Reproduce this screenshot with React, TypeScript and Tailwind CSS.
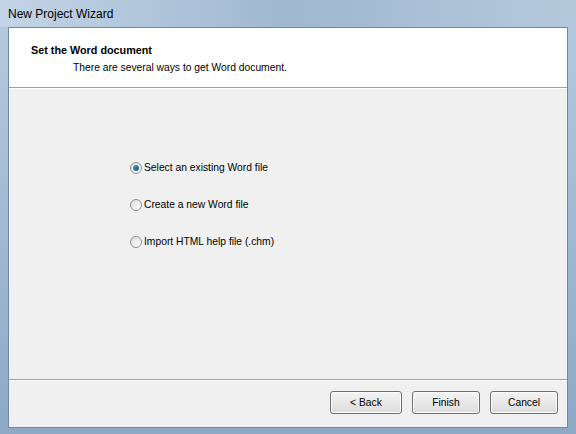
const font = { fontFamily: "'Liberation Sans', Arial, sans-serif" };

const Radio = ({ checked, label }: { checked?: boolean; label: string }) => (
  <label className="flex h-[13px] items-center gap-[2px] text-[10.3px] text-black">
    <span className="flex h-[12px] w-[12px] items-center justify-center rounded-full border border-[#8f8f8f] bg-gradient-to-br from-[#dcdcdc] to-[#ffffff]">
      {checked && (
        <span className="h-[6px] w-[6px] rounded-full bg-gradient-to-br from-[#4fa6c8] to-[#10506e]" />
      )}
    </span>
    {label}
  </label>
);

const Button = ({ children, w }: { children: string; w: string }) => (
  <button
    className={`h-[23px] ${w} rounded-[3px] border border-[#707070] bg-gradient-to-b from-[#f4f4f4] to-[#dcdcdc] text-[10.3px] text-black shadow-[inset_0_0_0_1px_#fcfcfc]`}
  >
    {children}
  </button>
);

export default function App() {
  return (
    <div
      className="flex h-[434px] w-[576px] flex-col bg-gradient-to-b from-[#b6cbe0] to-[#8ea9c6]"
      style={font}
    >
      {/* title bar */}
      <div className="flex h-[27px] items-center bg-gradient-to-r from-[#c3d4e5] via-[#9fb8d0] to-[#b4c9dc] pl-[8px] text-[12px] text-black">
        New Project Wizard
      </div>

      <div className="flex flex-1">
        <div className="w-[8px]" />
        <div className="flex flex-1 flex-col border border-[#6e8aa6] bg-[#f0f0f0]">
          {/* header */}
          <div className="h-[60px] border-b border-[#a0a0a0] bg-white pl-[22px] pt-[14px]">
            <div className="text-[10.8px] font-bold text-black">Set the Word document</div>
            <div className="mt-[2px] pl-[42px] text-[10.3px] text-black">
              There are several ways to get Word document.
            </div>
          </div>
          <div className="h-px bg-white" />

          {/* body */}
          <div className="flex flex-1 flex-col gap-[24px] pl-[121px] pt-[72px]">
            <Radio checked label="Select an existing Word file" />
            <Radio label="Create a new Word file" />
            <Radio label="Import HTML help file (.chm)" />
          </div>

          {/* footer */}
          <div className="h-px bg-[#a0a0a0]" />
          <div className="h-px bg-white" />
          <div className="flex h-[46px] items-start justify-end gap-[10px] pr-[9px] pt-[10px]">
            <Button w="w-[72px]">&lt; Back</Button>
            <Button w="w-[68px]">Finish</Button>
            <Button w="w-[68px]">Cancel</Button>
          </div>
        </div>
        <div className="w-[8px]" />
      </div>
      <div className="h-[6px]" />
    </div>
  );
}
